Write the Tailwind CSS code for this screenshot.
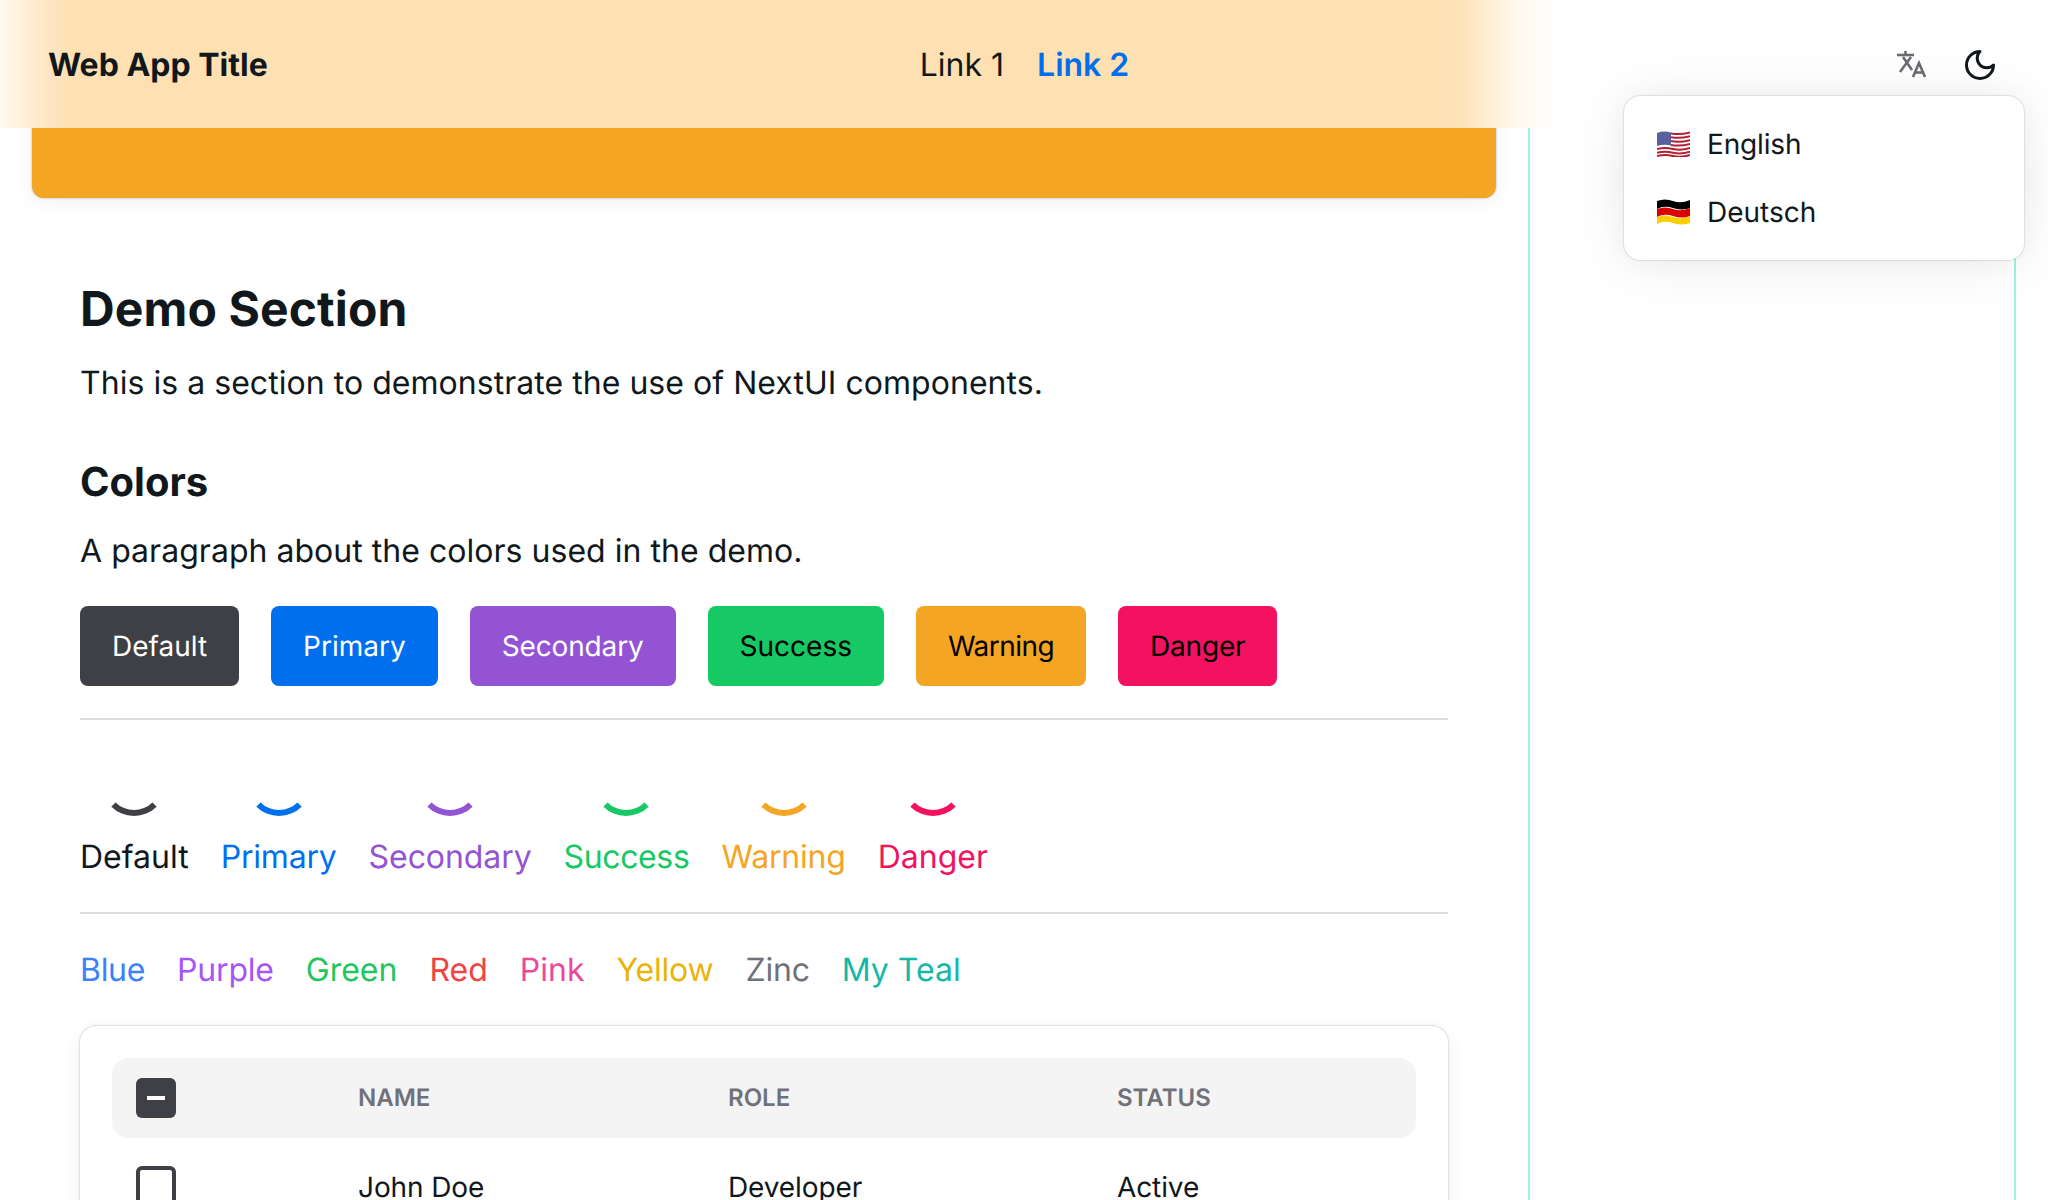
<!doctype html>
<html lang="en">
<head>
<meta charset="utf-8">
<script src="https://cdn.jsdelivr.net/npm/@tailwindcss/browser@4"></script>
<title>Web App Title</title>
</head>
<body class="bg-white text-[#11181c] [text-rendering:geometricPrecision] font-['Inter','Liberation_Sans',sans-serif]">
<div class="relative h-[1200px] w-[2048px] overflow-hidden">
  <header class="absolute left-0 top-0 z-10 flex h-[128px] w-full items-center justify-between bg-[linear-gradient(90deg,#fff9ef_0px,#fff1da_20px,#ffe5c2_50px,#fee0b2_72px,#fee0b2_1432px,#fee3ba_1462px,#ffebcd_1482px,#fff3e0_1502px,#fff9f0_1522px,#fffdf9_1542px,#ffffff_1565px)] px-12 pt-[2px]">
    <div class="flex-1 text-[32px] font-bold">Web App Title</div>
    <nav class="flex items-center gap-[33px] pl-[3px] text-[32px]">
      <span>Link 1</span>
      <span class="font-semibold text-[#006fee]">Link 2</span>
    </nav>
    <div class="flex flex-1 items-center justify-end gap-[31px] pr-[2px]">
      <svg class="h-10 w-10 text-[#6b6b72]" viewBox="0 0 40 40" fill="none" stroke="currentColor" stroke-width="2.600" stroke-linecap="butt" stroke-linejoin="miter"><path d="M6 10H23"/><path d="M14.500 6V10"/><path d="M12 12L21 25"/><path d="M20 12L9 27"/><path d="M22 32L28 18L34 32"/><path d="M24 27.500H32"/></svg>
      <svg class="h-9 w-9" viewBox="0 0 24 24" fill="none" stroke="currentColor" stroke-width="2" stroke-linecap="round" stroke-linejoin="round"><path d="M12 3a6 6 0 0 0 9 9 9 9 0 1 1-9-9Z"/></svg>
    </div>
  </header>

  <div class="absolute left-[1624px] top-[96px] z-20 h-[164px] w-[400px] rounded-[16px] bg-white pl-[33px] pr-8 py-4 shadow-[0_0_30px_0_rgb(0_0_0/0.03),0_4px_60px_0_rgb(0_0_0/0.08),0_0_2px_0_rgb(0_0_0/0.3)]">
    <div class="flex h-[64px] items-center gap-[17px] text-[28px]">
      <svg class="h-[26px] w-[33px]" viewBox="0 0 33 26">
        <path d="M0 2q8-3 16 0t17-1v22q-8 3-17 0t-16 2z" fill="#fff"/>
        <g fill="none" stroke="#b22234" stroke-width="2">
          <path d="M14 2.500q9 1.500 19-1"/><path d="M14 6.300q9 1.500 19-1"/><path d="M14 10.100q9 1.500 19-1"/><path d="M14 13.900q9 1.500 19-1"/><path d="M0 18q8-2 16 0t17-1"/><path d="M0 21.800q8-2 16 0t17-1"/><path d="M0 25q8-2 16 0t17-1"/>
        </g>
        <path d="M0 2q7-2.500 14-.5v13q-7-1.500-14 .5z" fill="#5a5f9e"/>
      </svg>
      <span class="tracking-[-0.15px]">English</span>
    </div>
    <div class="flex h-[72px] items-center gap-[17px] text-[28px]">
      <svg class="h-[26px] w-[33px]" viewBox="0 0 33 26">
        <path d="M0 2q8-3 16 0t17-1v8q-8 3-17 0t-16 1z" fill="#000"/>
        <path d="M0 10q8-3 16 0t17-1v8q-8 3-17 0t-16 1z" fill="#dd0000"/>
        <path d="M0 18q8-3 16 0t17-1v7q-8 3-17 0t-16 1z" fill="#ffce00"/>
      </svg>
      <span>Deutsch</span>
    </div>
  </div>

  <div class="flex gap-8 pl-8">
    <main class="w-[1464px] shrink-0">
      <div class="h-[198px] rounded-b-[12px] bg-[#f5a524] shadow-[0_0_10px_0_rgb(0_0_0/0.02),0_4px_20px_0_rgb(0_0_0/0.06),0_0_2px_0_rgb(0_0_0/0.3)]"></div>
      <section class="px-12 pt-[81px]">
        <h1 class="text-[48px] font-bold leading-[60px] tracking-[0.12px]">Demo Section</h1>
        <p class="mt-[20px] text-[32px] leading-[48px] tracking-[0.04px]">This is a section to demonstrate the use of NextUI components.</p>
        <h2 class="mt-[47px] text-[40px] font-bold leading-[56px]">Colors</h2>
        <p class="mt-[17px] text-[32px] leading-[48px] tracking-[0.03px]">A paragraph about the colors used in the demo.</p>
        <div class="mt-[31px] flex gap-8 text-[28px]">
          <div class="flex h-20 items-center rounded-[8px] bg-[#3f3f46] px-8 text-white">Default</div>
          <div class="flex h-20 items-center rounded-[8px] bg-[#006fee] px-8 text-white">Primary</div>
          <div class="flex h-20 items-center rounded-[8px] bg-[#9353d3] px-8 text-white tracking-[-0.15px]">Secondary</div>
          <div class="flex h-20 items-center rounded-[8px] bg-[#17c964] px-8 text-black">Success</div>
          <div class="flex h-20 items-center rounded-[8px] bg-[#f5a524] px-8 text-black tracking-[-0.55px]">Warning</div>
          <div class="flex h-20 items-center rounded-[8px] bg-[#f31260] px-8 text-black tracking-[-0.2px]">Danger</div>
        </div>
        <div class="mt-8 h-[2px] bg-[#dcdcde]"></div>
        <div class="mt-8 flex gap-8 text-[32px] leading-[48px]">
          <div class="flex flex-col items-center gap-[17px]"><div class="h-16 w-16 rounded-full border-[6px] border-transparent border-b-[#3f3f46]"></div><span>Default</span></div>
          <div class="flex flex-col items-center gap-[17px] text-[#006fee]"><div class="h-16 w-16 rounded-full border-[6px] border-transparent border-b-[#006fee]"></div><span class="tracking-[-0.19px]">Primary</span></div>
          <div class="flex flex-col items-center gap-[17px] text-[#9353d3]"><div class="h-16 w-16 rounded-full border-[6px] border-transparent border-b-[#9353d3]"></div><span class="tracking-[-0.08px]">Secondary</span></div>
          <div class="flex flex-col items-center gap-[17px] text-[#17c964]"><div class="h-16 w-16 rounded-full border-[6px] border-transparent border-b-[#17c964]"></div><span class="tracking-[-0.37px]">Success</span></div>
          <div class="flex flex-col items-center gap-[17px] text-[#f5a524]"><div class="h-16 w-16 rounded-full border-[6px] border-transparent border-b-[#f5a524]"></div><span class="tracking-[-0.19px]">Warning</span></div>
          <div class="flex flex-col items-center gap-[17px] text-[#f31260]"><div class="h-16 w-16 rounded-full border-[6px] border-transparent border-b-[#f31260]"></div><span>Danger</span></div>
        </div>
        <div class="mt-[31px] h-[2px] bg-[#dcdcde]"></div>
        <div class="mt-8 flex gap-8 text-[32px] leading-[48px]">
          <span class="text-[#3b82f6] tracking-[-0.3px]">Blue</span>
          <span class="text-[#a855f7] tracking-[-0.2px]">Purple</span>
          <span class="text-[#22c55e]">Green</span>
          <span class="text-[#ef4444]">Red</span>
          <span class="text-[#ec4899]">Pink</span>
          <span class="text-[#eab308] tracking-[-0.2px]">Yellow</span>
          <span class="text-[#71717a] tracking-[-0.2px]">Zinc</span>
          <span class="text-[#14b8a6]">My Teal</span>
        </div>
        <div class="mt-8 rounded-[16px] bg-white p-8 shadow-[0_0_10px_0_rgb(0_0_0/0.02),0_4px_20px_0_rgb(0_0_0/0.06),0_0_2px_0_rgb(0_0_0/0.3)]">
          <div class="grid h-20 grid-cols-[246px_370px_389px_299px] items-center rounded-[16px] bg-[#f4f4f5] text-[24px] font-semibold text-[#71717a]">
            <div class="pl-6"><div class="flex h-10 w-10 items-center justify-center rounded-[6px] bg-[#3f3f46]"><div class="h-1 w-[18px] bg-white"></div></div></div>
            <div>NAME</div>
            <div>ROLE</div>
            <div>STATUS</div>
          </div>
          <div class="mt-[26px] grid grid-cols-[246px_370px_389px_299px] items-center text-[28px] tracking-[-0.1px]">
            <div class="pl-6"><div class="h-10 w-10 rounded-[6px] border-4 border-[#3f3f46]"></div></div>
            <div class="pt-[2px]">John Doe</div>
            <div class="pt-[2px]">Developer</div>
            <div class="pt-[2px]">Active</div>
          </div>
        </div>
      </section>
    </main>
    <aside class="h-[1200px] w-[488px] shrink-0 border-x-2 border-[#99f6e4]"></aside>
  </div>
</div>
</body>
</html>
